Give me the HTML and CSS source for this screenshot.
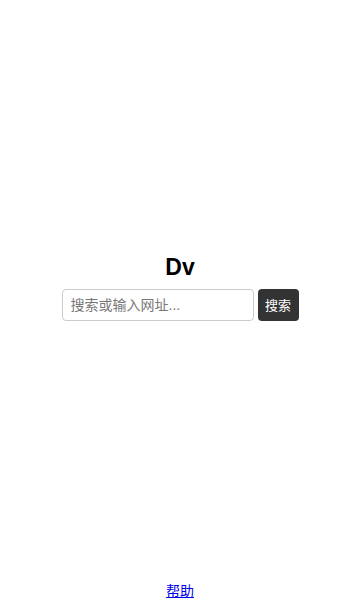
FILE: index.html
```html
<!DOCTYPE html>
<html lang="zh-CN">
<head>
    <meta charset="UTF-8">
    <meta name="viewport" content="width=device-width, initial-scale=1.0">
    <title>Dv</title>
    <link rel="stylesheet" href="styles.css">
</head>
<body>
    <div class="page">
        <!-- Search -->
        <main class="search-box">
            <h1 class="logo">Dv</h1>
            <form class="search-form" onsubmit="return false">
                <input class="search-input" type="text" placeholder="搜索或输入网址...">
                <button class="search-btn" type="submit">搜索</button>
            </form>
        </main>

        <footer class="footer">
            <a href="#" class="help-link">帮助</a>
        </footer>
    </div>
</body>
</html>
```

FILE: styles.css
```css
* {
    margin: 0;
    padding: 0;
    box-sizing: border-box;
}

body {
    font-family: "Liberation Sans", "Noto Sans CJK SC", sans-serif;
    background-color: #fff;
    color: #000;
}

.page {
    min-height: 100vh;
    display: flex;
    flex-direction: column;
}

/* Search */
.search-box {
    flex: 1;
    display: flex;
    flex-direction: column;
    align-items: center;
    justify-content: center;
    padding-bottom: 8px;
}

.logo {
    font-size: 23px;
    font-weight: 700;
    line-height: 26px;
    margin-bottom: 9px;
}

.search-form {
    display: flex;
    gap: 4px;
}

.search-input {
    width: 192px;
    height: 32px;
    padding: 0 8px;
    border: 1px solid #ccc;
    border-radius: 4px;
    font-family: inherit;
    font-size: 14px;
    outline: none;
}

.search-input::placeholder {
    color: #777;
}

.search-btn {
    width: 41px;
    height: 32px;
    background-color: #333;
    color: #fff;
    border: none;
    border-radius: 4px;
    font-family: inherit;
    font-size: 13px;
    cursor: pointer;
}

/* Footer */
.footer {
    text-align: center;
    line-height: 18px;
}

.help-link {
    font-size: 14px;
    color: #0000ee;
}
```
